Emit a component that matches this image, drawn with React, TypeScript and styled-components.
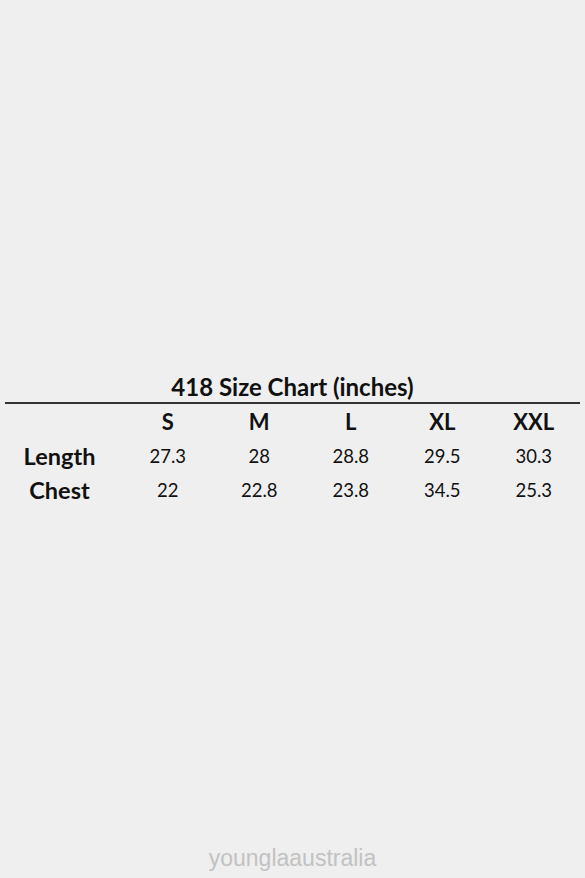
import React from "react";
import styled, { createGlobalStyle } from "styled-components";

const Global = createGlobalStyle`
  html, body { margin: 0; padding: 0; background: #efefef; }
  #root { width: 585px; height: 878px; }
`;

const Page = styled.div`
  width: 585px;
  height: 878px;
  background: #efefef;
  display: flex;
  flex-direction: column;
  font-family: Lato, "Open Sans", sans-serif;
  color: #111;
`;

const ChartArea = styled.div`
  padding: 372px 5px 0 5px;
  flex: 1;
`;

const Title = styled.div`
  text-align: center;
  font-weight: 700;
  font-size: 24px;
  line-height: 30px;
  border-bottom: 2px solid #333;
`;

const Grid = styled.div`
  display: grid;
  grid-template-columns: 117px repeat(5, 91.5px);
  grid-auto-rows: 34.5px;
  align-items: center;
`;

const Cell = styled.div<{ $bold?: boolean; $size?: number; $label?: boolean }>`
  text-align: center;
  font-weight: ${(p) => (p.$bold ? 700 : 400)};
  font-size: ${(p) => p.$size ?? 18.5}px;
  padding-right: ${(p) => (p.$label ? 8 : 0)}px;
`;

const Footer = styled.div`
  height: 50px;
  text-align: center;
  font-family: "Liberation Sans", Arial, sans-serif;
  font-size: 23px;
  color: #c2c2c2;
  line-height: 60px;
`;

const sizes = ["S", "M", "L", "XL", "XXL"];
const rows: [string, string[]][] = [
  ["Length", ["27.3", "28", "28.8", "29.5", "30.3"]],
  ["Chest", ["22", "22.8", "23.8", "34.5", "25.3"]],
];

export default function App() {
  return (
    <Page>
      <Global />
      <ChartArea>
        <Title>418 Size Chart (inches)</Title>
        <Grid>
          <Cell />
          {sizes.map((s) => (
            <Cell key={s} $bold $size={22}>
              {s}
            </Cell>
          ))}
          {rows.map(([label, vals]) => (
            <React.Fragment key={label}>
              <Cell $bold $size={23.5} $label>{label}</Cell>
              {vals.map((v, i) => (
                <Cell key={i}>{v}</Cell>
              ))}
            </React.Fragment>
          ))}
        </Grid>
      </ChartArea>
      <Footer>younglaaustralia</Footer>
    </Page>
  );
}
